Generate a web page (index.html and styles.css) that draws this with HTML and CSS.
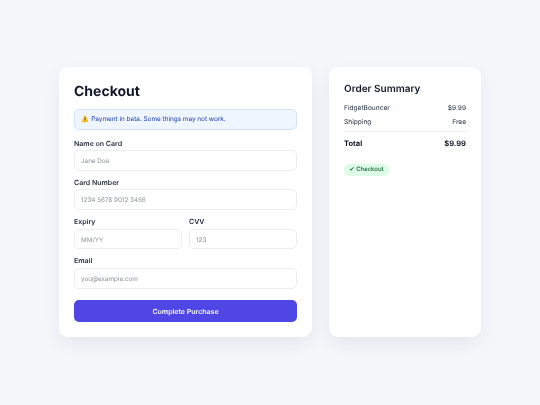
FILE: index.html
```html
<!DOCTYPE html>
<html lang="en">
<head>
<meta charset="utf-8">
<title>Checkout</title>
<link rel="stylesheet" href="styles.css">
</head>
<body>
<main class="layout">
  <section class="card checkout">
    <h1 class="title">Checkout</h1>
    <div class="alert">⚠️ Payment in beta. Some things may not work.</div>
    <div class="field"><label class="label">Name on Card</label><div class="input">Jane Doe</div></div>
    <div class="field"><label class="label">Card Number</label><div class="input">1234 5678 9012 3456</div></div>
    <div class="split">
      <div class="field"><label class="label">Expiry</label><div class="input">MM/YY</div></div>
      <div class="field"><label class="label">CVV</label><div class="input">123</div></div>
    </div>
    <div class="field"><label class="label">Email</label><div class="input">you@example.com</div></div>
    <button class="submit">Complete Purchase</button>
  </section>
  <aside class="card summary">
    <h2 class="subtitle">Order Summary</h2>
    <div class="row"><span>FidgetBouncer</span><span>$9.99</span></div>
    <div class="row"><span>Shipping</span><span>Free</span></div>
    <div class="row total"><span>Total</span><span>$9.99</span></div>
    <span class="badge">✔ Checkout</span>
  </aside>
</main>
</body>
</html>
```
FILE: styles.css
```css
* { box-sizing: border-box; }
html, body { margin: 0; height: 100%; }
body {
  background: #f5f7fb;
  font-family: Inter, "Liberation Sans", sans-serif;
  color: #111827;
  display: flex;
  align-items: center;
  justify-content: center;
  padding-bottom: 1px;
  text-rendering: geometricPrecision;
}
.layout { display: flex; gap: 17px; width: 422px; height: 270px; will-change: transform; }
.card {
  background: #fff;
  border-radius: 9px;
  padding: 15px;
  box-shadow: 0 7px 20px rgba(30, 41, 59, 0.08);
}
.checkout { width: 253px; display: flex; flex-direction: column; }
.summary { width: 152px; padding-top: 16px; }
.title { margin: 1px 0 8px; font-size: 14px; line-height: 18px; font-weight: 700; color: #111827; }
.alert {
  height: 20.6px;
  margin-bottom: 8px;
  padding: 0 6.5px;
  display: flex;
  align-items: center;
  background: #eff6ff;
  border: 0.5px solid #d3e4fb;
  border-radius: 5px;
  color: #1e40af;
  font-size: 6.4px;
  white-space: pre;
}
.field { margin-bottom: 6px; min-width: 0; }
.label { display: block; font-size: 7px; line-height: 12px; font-weight: 600; color: #1f2937; margin-bottom: 0.5px; }
.input {
  height: 20.8px;
  padding: 1px 6px 0;
  display: flex;
  align-items: center;
  background: #fff;
  border: 0.5px solid #ebedf0;
  border-radius: 5px;
  color: #8b929e;
  font-size: 6.3px;
}
.split { display: grid; grid-template-columns: 108px 108px; gap: 7px; }
.submit {
  height: 22px;
  margin-top: 5px;
  padding: 1px 0 0;
  border: 0;
  border-radius: 5px;
  background: #4f46e5;
  color: #fff;
  font-family: inherit;
  font-size: 7px;
  font-weight: 600;
  text-rendering: geometricPrecision;
}
.subtitle { margin: 0 0 8px; font-size: 10px; line-height: 12px; font-weight: 600; }
.row { display: flex; justify-content: space-between; font-size: 6.6px; line-height: 10px; color: #1f2937; margin-bottom: 4px; }
.total { margin-top: 1px; padding-top: 7px; border-top: 0.5px solid #ebedf0; font-weight: 700; font-size: 7.5px; color: #111827; margin-bottom: 0; }
.badge {
  display: inline-block;
  margin-top: 14.5px;
  padding: 0 5.5px;
  height: 12.5px;
  line-height: 12.5px;
  border-radius: 7px;
  background: #dcfce7;
  color: #166534;
  font-size: 6px;
  font-weight: 500;
}
```
